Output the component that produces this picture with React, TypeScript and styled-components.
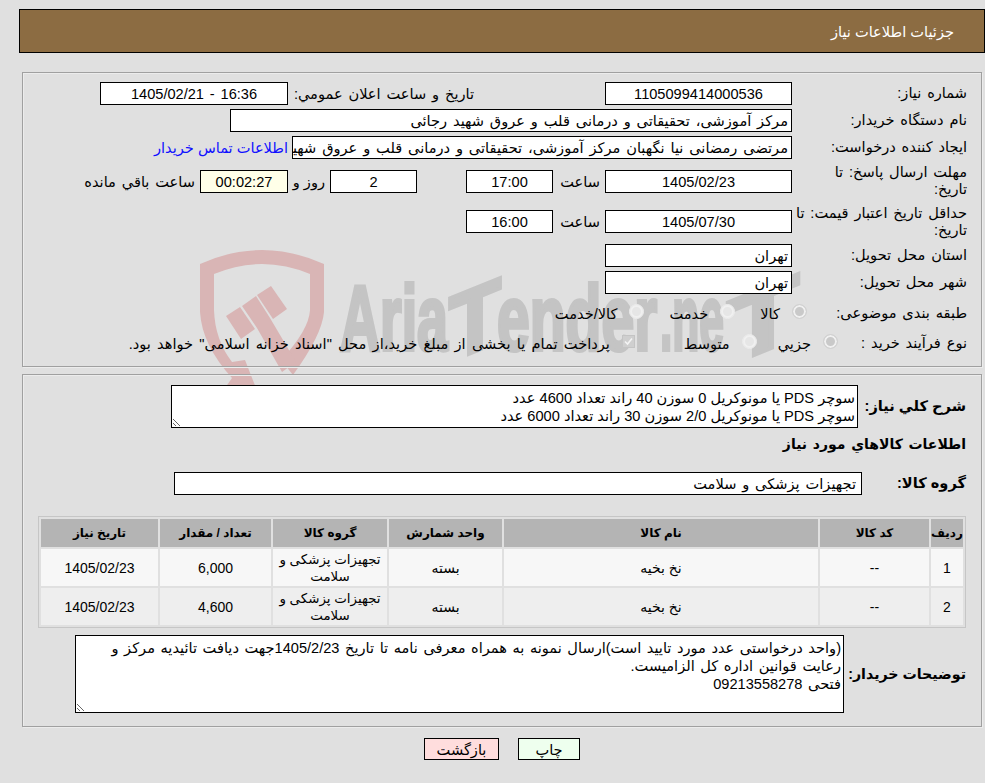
import styled, { createGlobalStyle } from 'styled-components'

const GlobalStyle = createGlobalStyle`
  html, body {
    margin: 0;
    padding: 0;
    background: #e0e0e0;
  }
  body {
    font-family: "Liberation Sans", "DejaVu Sans", sans-serif;
    font-size: 14.6px;
    word-spacing: 1.8px;
    color: #000;
  }
`

const Page = styled.div`
  position: relative;
  direction: rtl;
  width: 985px;
  height: 783px;
  padding: 9px 0 0 19px;
  box-sizing: border-box;
  overflow: hidden;
`
const Watermark = styled.svg`
  position: absolute;
  left: 190px;
  top: 240px;
  z-index: 0;
`
const MarkText = styled.text`
  font-family: "Liberation Sans", sans-serif;
  font-weight: bold;
  font-size: 92px;
  fill: #c4c4c4;
  stroke: #c4c4c4;
  stroke-width: 4px;
  direction: ltr;
  word-spacing: 0;
`
const Header = styled.div`
  position: relative;
  height: 44px;
  line-height: 44px;
  box-sizing: border-box;
  background: #8c6c42;
  border: 1px solid #000;
  color: #fff;
  padding-right: 30px;
  margin-bottom: 19px;
  word-spacing: 0;
`
const Panel = styled.div<{ $h: number }>`
  position: relative;
  z-index: 1;
  height: ${(p) => p.$h}px;
  box-sizing: border-box;
  margin: 0 3px 7px 3px;
  border: 1px solid #a0a0a0;
  box-shadow: inset 1px 1px 0 #ececec, 1px 1px 0 #ececec;
`
const Form = styled.div`
  display: grid;
  gap: 4px;
  padding: 9px 14px 0 0;
`
const Row = styled.div<{ $h?: number }>`
  display: flex;
  align-items: center;
  min-height: ${(p) => p.$h ?? 23}px;
`
const Label = styled.div<{ $w?: number; $bold?: boolean }>`
  width: ${(p) => p.$w ?? 175}px;
  flex: none;
  line-height: 17px;
  font-weight: ${(p) => (p.$bold ? 'bold' : 'normal')};
  white-space: ${(p) => (p.$bold ? 'nowrap' : 'normal')};
  word-spacing: ${(p) => (p.$bold ? 0 : 'inherit')};
`
const BuyerLabel = styled(Label)`
  font-size: 14.2px;
`
const Field = styled.div<{ $w: number; $center?: boolean; $bg?: string; $pad?: number }>`
  width: ${(p) => p.$w}px;
  height: 23px;
  flex: none;
  box-sizing: border-box;
  border: 1px solid #000;
  background: ${(p) => p.$bg ?? '#fff'};
  line-height: 23px;
  padding: 0 ${(p) => p.$pad ?? 3}px 0 3px;
  text-align: ${(p) => (p.$center ? 'center' : 'right')};
  white-space: nowrap;
  overflow: hidden;
`
const Text = styled.div<{ $w: number; $pad?: number }>`
  width: ${(p) => p.$w}px;
  flex: none;
  padding-right: ${(p) => p.$pad ?? 5}px;
  box-sizing: border-box;
  white-space: nowrap;
`
const DayText = styled(Text)`
  word-spacing: 0;
`
const Link = styled.a`
  color: #1010ff;
  margin-right: 4px;
  white-space: nowrap;
  word-spacing: 0;
`
const Options = styled.div<{ $gap: number }>`
  display: flex;
  align-items: center;
  gap: ${(p) => p.$gap}px;
`
const Option = styled.label`
  display: flex;
  align-items: center;
  gap: 12px;
  white-space: nowrap;
  word-spacing: 2.2px;
`
const Radio = styled.span<{ $on?: boolean }>`
  width: 15px;
  height: 15px;
  margin-top: -4px;
  flex: none;
  border-radius: 50%;
  background: ${(p) => (p.$on ? '#c9c9c9' : '#e6e6e6')};
  border: 1px solid ${(p) => (p.$on ? '#d2d2d2' : '#ececec')};
  box-shadow: inset 0 0 0 2px #f0f0f0;
  box-sizing: border-box;
`
const Check = styled.span`
  width: 13px;
  height: 13px;
  margin: -5px 28px 0 0;
  flex: none;
  background: #cfcfcf;
  border: 1px solid #c4c4c4;
  box-sizing: border-box;
  color: #f4f4f4;
  display: flex;
  align-items: center;
  justify-content: center;
`
const Note = styled.textarea<{ $w: number; $h: number; $ws: number }>`
  width: ${(p) => p.$w}px;
  height: ${(p) => p.$h}px;
  box-sizing: border-box;
  border: 1px solid #000;
  background: #fff;
  padding: 3px 2px 0;
  margin: 0;
  flex: none;
  font: inherit;
  word-spacing: ${(p) => p.$ws}px;
  line-height: 18px;
  color: #000;
  direction: rtl;
  resize: both;
  overflow: hidden;
  outline: none;
`
const Lower = styled.div`
  display: flex;
  flex-direction: column;
  padding: 10px 15px 0 0;
`
const GoodsTitle = styled.div`
  font-weight: bold;
  font-size: 14px;
  margin: 8px 0 19px;
  line-height: 17px;
`
const GoodsTable = styled.table`
  width: 928px;
  height: 111px;
  border-collapse: separate;
  border-spacing: 2px;
  border: 1px solid #c6c6c6;
  margin-top: 21px;
  table-layout: fixed;
  text-align: center;
  font-size: 14px;
  word-spacing: 0;
  th {
    background: #b4b4b4;
    font-weight: bold;
    font-size: 12px;
    height: 28px;
    padding: 0;
  }
  td {
    padding: 1px 0 0;
    line-height: 17px;
    height: 36px;
  }
  tbody tr:nth-child(odd) td {
    background: #f7f7f7;
  }
  tbody tr:nth-child(even) td {
    background: #eeeeee;
  }
`
const GroupCell = styled.td`
  font-size: 13.4px;
`
const BuyerRow = styled.div`
  display: flex;
  align-items: center;
  margin-top: 7px;
`
const Buttons = styled.div`
  position: relative;
  z-index: 1;
  display: flex;
  justify-content: center;
  gap: 19px;
  margin-top: 11px;
`
const Button = styled.button<{ $bg: string; $w: number }>`
  width: ${(p) => p.$w}px;
  height: 22px;
  padding: 0;
  border: 1px solid #000;
  background: ${(p) => p.$bg};
  font: inherit;
  color: #000;
`

const rows = [
  { id: 1, qty: '6,000' },
  { id: 2, qty: '4,600' },
]

export default function App() {
  return (
    <Page>
      <GlobalStyle />
      <Watermark width="640" height="150" viewBox="190 240 640 150">
        <g fill="#d9b5b5">
          <path d="M200 264 Q262 236 324 264 V312 Q322 335 293 375 L281 360 Q309 330 310 310 V274 Q262 254 214 274 V310 Q215 340 232 362 L245 360 L256 388 H225 L232 378 Q202 345 200 312 Z" />
          <path d="M226 316 L240 307 L255 329 L241 339 Z" />
          <path d="M242 306 L256 296 L270 318 L296 362 L282 372 L257 328 Z" />
          <path d="M257 295 L271 286 L287 309 L273 319 Z" />
        </g>
        <MarkText x="340" y="350" textLength="108" lengthAdjust="spacingAndGlyphs">Aria</MarkText>
        <MarkText transform="translate(449 362) skewY(-22)" textLength="52" lengthAdjust="spacingAndGlyphs">T</MarkText>
        <MarkText x="497" y="350" textLength="160" lengthAdjust="spacingAndGlyphs">ender</MarkText>
        <MarkText x="660" y="350" textLength="64" lengthAdjust="spacingAndGlyphs">.ne</MarkText>
        <MarkText transform="translate(727 366) skewY(-22)" textLength="72" lengthAdjust="spacingAndGlyphs">T</MarkText>
      </Watermark>

      <Header>جزئیات اطلاعات نیاز</Header>

      <Panel $h={295}>
        <Form>
          <Row>
            <Label>شماره نیاز:</Label>
            <Field $w={187} $center>1105099414000536</Field>
            <Text $w={317} $pad={131}>تاريخ و ساعت اعلان عمومي:</Text>
            <Field $w={188} $center>16:36 - 1405/02/21</Field>
          </Row>
          <Row>
            <Label>نام دستگاه خریدار:</Label>
            <Field $w={562}>مرکز آموزشی، تحقیقاتی و درمانی قلب و عروق شهید رجائی</Field>
          </Row>
          <Row>
            <Label>ایجاد کننده درخواست:</Label>
            <Field $w={500}>مرتضی رمضانی نیا نگهبان مرکز آموزشی، تحقیقاتی و درمانی قلب و عروق شهید رجائی</Field>
            <Link>اطلاعات تماس خریدار</Link>
          </Row>
          <Row $h={36}>
            <Label>مهلت ارسال پاسخ: تا<br />تاریخ:</Label>
            <Field $w={187} $center>1405/02/23</Field>
            <Text $w={52}>ساعت</Text>
            <Field $w={87} $center>17:00</Field>
            <Text $w={49}>&nbsp;</Text>
            <Field $w={87} $center>2</Field>
            <DayText $w={42}>روز و</DayText>
            <Field $w={88} $center $bg="#ffffe8">00:02:27</Field>
            <Text $w={120}>ساعت باقي مانده</Text>
          </Row>
          <Row $h={37}>
            <Label>حداقل تاریخ اعتبار قیمت: تا<br />تاریخ:</Label>
            <Field $w={187} $center>1405/07/30</Field>
            <Text $w={52}>ساعت</Text>
            <Field $w={87} $center>16:00</Field>
          </Row>
          <Row>
            <Label>استان محل تحویل:</Label>
            <Field $w={187}>تهران</Field>
          </Row>
          <Row>
            <Label>شهر محل تحویل:</Label>
            <Field $w={187}>تهران</Field>
          </Row>
          <Row $h={30}>
            <Label $w={160}>طبقه بندی موضوعی:</Label>
            <Options $gap={25}>
              <Option><Radio $on />کالا</Option>
              <Option><Radio />خدمت</Option>
              <Option><Radio />کالا/خدمت</Option>
            </Options>
          </Row>
          <Row>
            <Label $w={129}>نوع فرآیند خرید :</Label>
            <Options $gap={21}>
              <Option><Radio $on />جزيي</Option>
              <Option><Radio />متوسط</Option>
              <Option>
                <Check>
                  <svg width="9" height="9" viewBox="0 0 9 9" fill="none" stroke="currentColor" strokeWidth="1.6">
                    <path d="M1 4.5 L3.5 7 L8 1.5" />
                  </svg>
                </Check>
                پرداخت تمام یا بخشی از مبلغ خرید،از محل "اسناد خزانه اسلامی" خواهد بود.
              </Option>
            </Options>
          </Row>
        </Form>
      </Panel>

      <Panel $h={353}>
        <Lower>
          <Row $h={43}>
            <Label $w={108} $bold>شرح کلي نیاز:</Label>
            <Note
              $w={687}
              $h={43}
              $ws={0}
              readOnly
              value={'سوچر PDS یا مونوکریل 0 سوزن 40 راند تعداد 4600 عدد\nسوچر PDS یا مونوکریل 2/0 سوزن 30 راند تعداد 6000 عدد'}
            />
          </Row>
          <GoodsTitle>اطلاعات کالاهاي مورد نیاز</GoodsTitle>
          <Row>
            <Label $w={104} $bold>گروه کالا:</Label>
            <Field $w={688} $pad={5}>تجهیزات پزشکی و سلامت</Field>
          </Row>
          <GoodsTable>
            <colgroup>
              <col style={{ width: 32 }} />
              <col style={{ width: 109 }} />
              <col style={{ width: 314 }} />
              <col style={{ width: 113 }} />
              <col style={{ width: 114 }} />
              <col style={{ width: 111 }} />
              <col />
            </colgroup>
            <thead>
              <tr>
                <th>ردیف</th>
                <th>کد کالا</th>
                <th>نام کالا</th>
                <th>واحد شمارش</th>
                <th>گروه کالا</th>
                <th>تعداد / مقدار</th>
                <th>تاریخ نیاز</th>
              </tr>
            </thead>
            <tbody>
              {rows.map((r) => (
                <tr key={r.id}>
                  <td>{r.id}</td>
                  <td>--</td>
                  <td>نخ بخیه</td>
                  <td>بسته</td>
                  <GroupCell>تجهیزات پزشکی و سلامت</GroupCell>
                  <td>{r.qty}</td>
                  <td>1405/02/23</td>
                </tr>
              ))}
            </tbody>
          </GoodsTable>
          <BuyerRow>
            <BuyerLabel $w={122} $bold>توضیحات خریدار:</BuyerLabel>
            <Note
              $w={769}
              $h={78}
              $ws={1.5}
              readOnly
              value={'(واحد درخواستی عدد مورد تایید است)ارسال نمونه به همراه معرفی نامه تا تاریخ 1405/2/23جهت دیافت تائیدیه مرکز و\nرعایت قوانین اداره کل الزامیست.\nفتحی 09213558278'}
            />
          </BuyerRow>
        </Lower>
      </Panel>

      <Buttons>
        <Button $bg="#eeffee" $w={62}>چاپ</Button>
        <Button $bg="#ffdddd" $w={75}>بازگشت</Button>
      </Buttons>
    </Page>
  )
}
